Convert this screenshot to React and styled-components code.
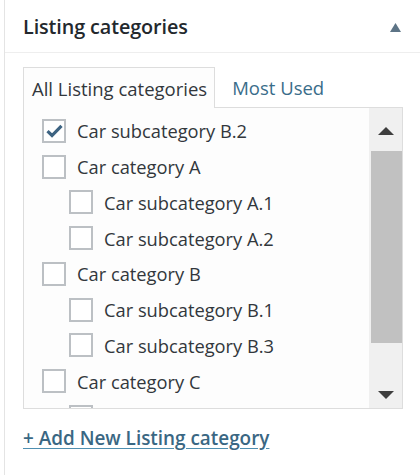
import React from "react";
import styled, { createGlobalStyle } from "styled-components";

const CATEGORIES = [
  { id: "b2", name: "Car subcategory B.2", level: 0, checked: true },
  { id: "a", name: "Car category A", level: 0 },
  { id: "a1", name: "Car subcategory A.1", level: 1 },
  { id: "a2", name: "Car subcategory A.2", level: 1 },
  { id: "b", name: "Car category B", level: 0 },
  { id: "b1", name: "Car subcategory B.1", level: 1 },
  { id: "b3", name: "Car subcategory B.3", level: 1 },
  { id: "c", name: "Car category C", level: 0 },
  { id: "c1", name: "Car subcategory C.1", level: 1 },
];

const GlobalStyle = createGlobalStyle`
  html, body {
    margin: 0;
    padding: 0;
    background: #ffffff;
  }
  body {
    font-family: "Open Sans", "Noto Sans", sans-serif;
    color: #32373c;
  }
`;

const App = () => {
  return (
    <>
      <GlobalStyle />
      <Panel>
        <Header>
          <Title>Listing categories</Title>
          <Toggle aria-label="Toggle panel">
            <svg width="11" height="9" viewBox="0 0 11 9">
              <path d="M5.5 0 L11 9 L0 9 Z" fill="#5d7486" />
            </svg>
          </Toggle>
        </Header>
        <Inside>
          <Tabs>
            <Tab $active>All Listing categories</Tab>
            <Tab>Most Used</Tab>
          </Tabs>
          <ListBox>
            <List>
              {CATEGORIES.map((cat) => (
                <Row key={cat.id} $level={cat.level}>
                  <Checkbox>
                    {cat.checked && (
                      <svg width="17" height="14" viewBox="0 0 17 14">
                        <path
                          d="M1.5 7.2 L6 11.5 L15.5 1.8"
                          fill="none"
                          stroke="#3d6382"
                          strokeWidth="3.2"
                        />
                      </svg>
                    )}
                  </Checkbox>
                  <Label>{cat.name}</Label>
                </Row>
              ))}
            </List>
            <Scrollbar>
              <ScrollButton>
                <Arrow $up />
              </ScrollButton>
              <Track>
                <Thumb />
              </Track>
              <ScrollButton>
                <Arrow />
              </ScrollButton>
            </Scrollbar>
          </ListBox>
          <AddLink href="#">+ Add New Listing category</AddLink>
        </Inside>
      </Panel>
    </>
  );
};

const Panel = styled.div`
  margin-left: 4px;
  border-left: 1px solid #e4e4e4;
  min-height: 475px;
  box-sizing: border-box;
`;

const Header = styled.div`
  display: flex;
  align-items: center;
  justify-content: space-between;
  height: 52px;
  border-bottom: 1px solid #eeeeee;
  padding: 0 19px 0 18px;
`;

const Title = styled.h2`
  margin: 0;
  font-size: 19.8px;
  font-weight: 600;
  color: #23282d;
  letter-spacing: -0.1px;
`;

const Toggle = styled.button`
  display: flex;
  border: none;
  background: none;
  padding: 0;
  margin-top: 2px;
`;

const Inside = styled.div`
  padding: 14px 17px 0 18px;
`;

const Tabs = styled.div`
  display: flex;
  align-items: flex-end;
  gap: 16px;
  height: 40px;
`;

const Tab = styled.div`
  box-sizing: border-box;
  height: ${(p) => (p.$active ? "41px" : "40px")};
  margin-bottom: ${(p) => (p.$active ? "-1px" : "0")};
  padding: 0 7px 0 8px;
  display: flex;
  align-items: center;
  font-size: 18.5px;
  color: ${(p) => (p.$active ? "#32373c" : "#3a6d8a")};
  background: ${(p) => (p.$active ? "#fdfdfd" : "transparent")};
  border: 1px solid ${(p) => (p.$active ? "#dddddd" : "transparent")};
  border-bottom: none;
  position: relative;
  z-index: 1;
  ${(p) => !p.$active && "padding-left: 0;"}
`;

const ListBox = styled.div`
  display: flex;
  height: 302px;
  box-sizing: border-box;
  border: 1px solid #dddddd;
  background: #fdfdfd;
`;

const List = styled.ul`
  flex: 1;
  list-style: none;
  margin: 0;
  padding: 5px 0 0 18px;
  overflow: hidden;
`;

const Row = styled.li`
  display: flex;
  align-items: center;
  height: 35.75px;
  padding-left: ${(p) => p.$level * 27}px;
`;

const Checkbox = styled.span`
  box-sizing: border-box;
  flex: none;
  width: 24px;
  height: 24px;
  border: 2px solid #bcc0c4;
  background: #ffffff;
  display: flex;
  align-items: center;
  justify-content: center;
`;

const Label = styled.span`
  margin-left: 11px;
  font-size: 18.3px;
  color: #32373c;
  white-space: nowrap;
`;

const Scrollbar = styled.div`
  flex: none;
  width: 33px;
  display: flex;
  flex-direction: column;
  background: #f0f0f0;
`;

const ScrollButton = styled.div`
  flex: none;
  height: 43px;
  display: flex;
  align-items: center;
  justify-content: center;
`;

const Arrow = styled.span`
  width: 0;
  height: 0;
  border-left: 8px solid transparent;
  border-right: 8px solid transparent;
  ${(p) =>
    p.$up
      ? "border-bottom: 8px solid #3e3e3e; margin-top: 2px;"
      : "border-top: 8px solid #3e3e3e; margin-top: 16px;"}
`;

const Track = styled.div`
  flex: 1;
  padding-left: 2px;
`;

const Thumb = styled.div`
  height: 192px;
  background: #c1c1c1;
`;

const AddLink = styled.a`
  display: inline-block;
  margin-top: 16px;
  font-size: 18.9px;
  font-weight: 600;
  color: #3a6783;
  text-decoration: underline;
  text-decoration-color: #4f8fb0;
  text-underline-offset: 3px;
`;

export default App;
